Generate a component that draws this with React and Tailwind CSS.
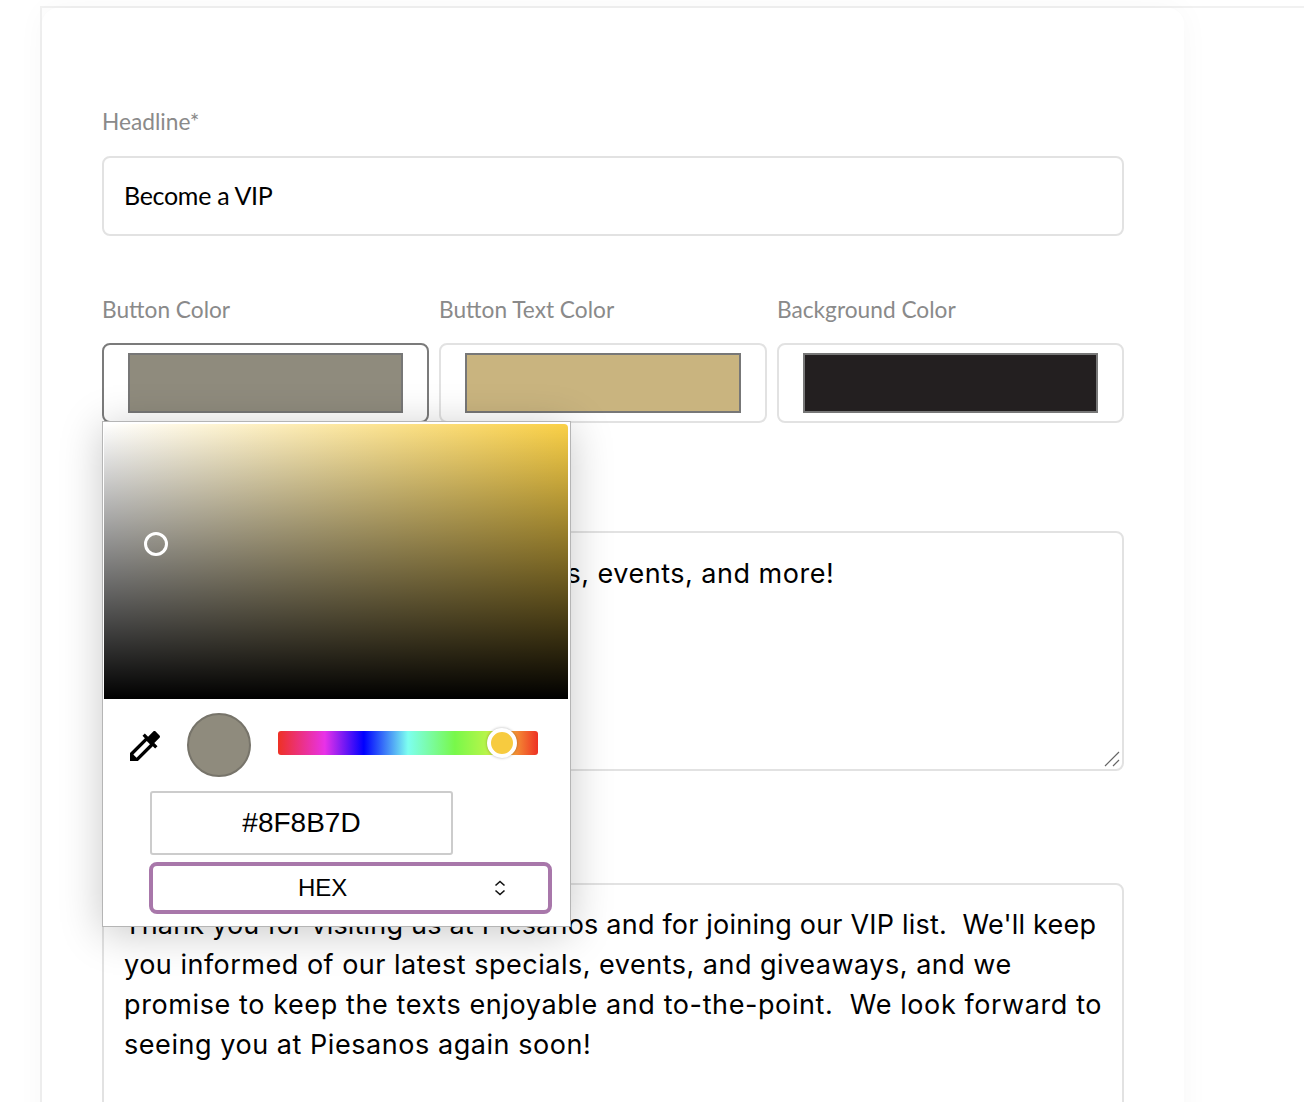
const labelCls = "block font-['Lato',sans-serif] text-[22.7px] leading-[30px] text-[#8a8a8a]";
const bodyCls = "font-['Inter',sans-serif] text-[27px] leading-[40px] text-black whitespace-pre";

function Swatch({ color, active }) {
  return (
    <div className={`h-[80px] rounded-[8px] border-2 bg-white pl-[24px] pr-[24px] py-[8px] ${active ? "border-[#7b7b7b]" : "border-[#e2e2e2]"}`}>
      <div className="h-[60px] border-2 border-[#777]" style={{ background: color }} />
    </div>
  );
}

function Picker() {
  return (
    <div className="absolute left-[102px] top-[421px] z-10 h-[506px] w-[469px] border border-[#b5b5b5] bg-white px-[1px] pt-[2px] shadow-[0_6px_40px_rgba(0,0,0,0.22)]">
      <div className="relative h-[275px] w-[464px] rounded-tr-[4px] bg-[linear-gradient(to_top,#000,transparent),linear-gradient(to_right,#fff,#fad046)]">
        <div className="absolute left-[40px] top-[108px] h-[24px] w-[24px] rounded-full border-[3px] border-white" />
      </div>
      <div className="flex h-[92px] items-center">
        <svg className="ml-[21px] mt-[1px] h-[40px] w-[40px]" viewBox="0 0 24 24" fill="#000">
          <path d="M20.71 5.63l-2.34-2.34c-.39-.39-1.02-.39-1.41 0l-3.12 3.12-1.93-1.91-1.41 1.41 1.42 1.42L3 16.25V21h4.75l8.92-8.92 1.42 1.42 1.41-1.41-1.92-1.92 3.12-3.12c.4-.4.4-1.03.01-1.42zM6.92 19L5 17.08l8.06-8.06 1.92 1.92L6.92 19z" />
        </svg>
        <div className="ml-[22px] h-[64px] w-[64px] rounded-full border-2 border-[#77746a] bg-[#8f8b7d]" />
        <div className="relative ml-[27px] mb-[4px] h-[24px] w-[260px] rounded-[3px] bg-[linear-gradient(to_right,#ee3124_0%,#e832e8_18%,#0000ff_33%,#7dfff0_50%,#78f84a_68%,#b6f54a_80%,#f7cb3f_86%,#ee3124_100%)]">
          <div className="absolute left-[209px] top-[-3px] h-[30px] w-[30px] rounded-full border-[4px] border-white bg-[#f7cb3f] shadow-[0_0_3px_rgba(0,0,0,0.3)]" />
        </div>
      </div>
      <div className="ml-[46px] flex h-[64px] w-[303px] items-center justify-center rounded-[3px] border-2 border-[#cccccc] font-['Liberation_Sans',sans-serif] text-[28px] text-black">
        #8F8B7D
      </div>
      <div className="relative ml-[45px] mt-[7px] flex h-[52px] w-[403px] items-center rounded-[8px] border-4 border-[#a877aa] bg-white font-['Liberation_Sans',sans-serif] text-[24px] text-black">
        <span className="ml-[145px]">HEX</span>
        <svg className="absolute left-[339px] top-[13px] h-[18px] w-[16px]" viewBox="0 0 16 18" fill="none" stroke="#111" strokeWidth="1.6">
          <path d="M3.5 6.5 8 2.5l4.5 4M3.5 11.5 8 15.5l4.5-4" />
        </svg>
      </div>
    </div>
  );
}

export default function App() {
  return (
    <div className="relative h-[1102px] w-[1304px] overflow-hidden bg-white">
      <div className="ml-[40px] mt-[6px] h-[1096px] border-l-2 border-t-2 border-[#f1f1f1]">
        <div className="h-[1200px] w-[1142px] rounded-[16px] bg-white px-[60px] pt-[99px] shadow-[0_0_30px_rgba(0,0,0,0.035)]">
          <label className={labelCls}>Headline*</label>
          <div className="mt-[19px] flex h-[80px] items-center rounded-[8px] border-2 border-[#e2e2e2] px-[20px] font-['Lato',sans-serif] text-[25px] tracking-[-0.3px] text-black">
            Become a VIP
          </div>

          <div className="mt-[59px] grid grid-cols-[327px_328px_347px] gap-x-[10px]">
            <label className={labelCls}>Button Color</label>
            <label className={labelCls}>Button Text Color</label>
            <label className={labelCls}>Background Color</label>
            <div className="mt-[18px]"><Swatch color="#8f8b7d" active /></div>
            <div className="mt-[18px]"><Swatch color="#c9b47f" /></div>
            <div className="mt-[18px]"><Swatch color="#231f20" /></div>
          </div>

          <label className={`${labelCls} mt-[59px]`}>Subheadline*</label>
          <div className={`relative mt-[19px] h-[240px] overflow-hidden rounded-[8px] border-2 border-[#e2e2e2] px-[20px] pt-[21px] tracking-[0.5px] ${bodyCls}`}>
            Be the first to know about specials, events, and more!
            <svg className="absolute bottom-[1px] right-[1px] h-[18px] w-[18px]" viewBox="0 0 18 18" stroke="#666" strokeWidth="1.2" fill="none">
              <path d="M2 16 16 2M10 16l6-6" />
            </svg>
          </div>

          <label className={`${labelCls} mt-[63px]`}>Welcome Message*</label>
          <div className={`mt-[19px] h-[300px] rounded-[8px] border-2 border-[#e2e2e2] px-[20px] pt-[20px] ${bodyCls}`}>
            <div className="tracking-[0.2px]">Thank you for visiting us at Piesanos and for joining our VIP list.  We'll keep</div>
            <div className="tracking-[0.5px]">you informed of our latest specials, events, and giveaways, and we</div>
            <div className="tracking-[0.6px]">promise to keep the texts enjoyable and to-the-point.  We look forward to</div>
            <div className="tracking-[0.55px]">seeing you at Piesanos again soon!</div>
          </div>
        </div>
      </div>
      <Picker />
    </div>
  );
}
